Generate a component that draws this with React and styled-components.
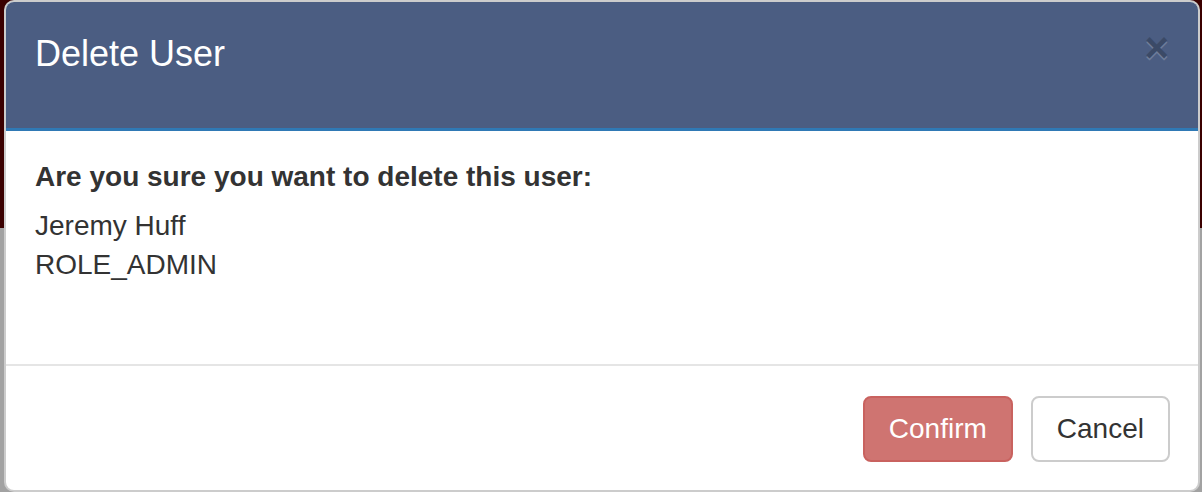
import React from "react";
import styled, { createGlobalStyle } from "styled-components";

const GlobalStyle = createGlobalStyle`
  html, body {
    margin: 0;
    padding: 0;
  }
  body {
    font-family: "Liberation Sans", Arial, Helvetica, sans-serif;
    color: #333;
  }
`;

const Backdrop = styled.div`
  height: 492px;
  box-sizing: border-box;
  padding: 0 2px 0 4px;
  background: linear-gradient(to bottom, #3b0000 0, #3b0000 228px, #a2a2a2 228px);
  overflow: hidden;
`;

const Dialog = styled.div`
  height: 492px;
  box-sizing: border-box;
  display: flex;
  flex-direction: column;
  background: #fff;
  border: 2px solid rgba(0, 0, 0, 0.2);
  border-radius: 10px;
  overflow: hidden;
`;

const Header = styled.div`
  display: flex;
  justify-content: space-between;
  align-items: flex-start;
  height: 129px;
  box-sizing: border-box;
  padding: 26px 29px 0 29px;
  background: #4b5d82;
  border-bottom: 3px solid #2f79b5;
`;

const Title = styled.h4`
  margin: 0;
  font-size: 36px;
  line-height: 51px;
  font-weight: normal;
  color: #fff;
`;

const Close = styled.button`
  margin-top: -1px;
  padding: 0;
  border: 0;
  background: transparent;
  font-family: "Liberation Sans", Arial, sans-serif;
  font-size: 42px;
  font-weight: bold;
  line-height: 42px;
  color: #000;
  opacity: 0.2;
  text-shadow: 0 2px 0 #fff;
  cursor: pointer;
`;

const Body = styled.div`
  flex: 1;
  padding: 26px 29px;
  font-size: 28px;
  line-height: 40px;
`;

const Question = styled.div`
  font-weight: bold;
  margin-bottom: 9px;
`;

const Line = styled.div`
  line-height: 39px;
`;

const Footer = styled.div`
  display: flex;
  justify-content: flex-end;
  gap: 18px;
  padding: 30px 28px 28px;
  border-top: 2px solid #e5e5e5;
`;

const Button = styled.button`
  height: 66px;
  box-sizing: border-box;
  padding: 0 24px;
  font-family: "Liberation Sans", Arial, sans-serif;
  font-size: 28px;
  border-radius: 8px;
  border: 2px solid ${(p) => (p.$danger ? "#c9625f" : "#ccc")};
  background: ${(p) => (p.$danger ? "#cf7471" : "#fff")};
  color: ${(p) => (p.$danger ? "#fff" : "#333")};
  cursor: pointer;
`;

export default function App() {
  return (
    <Backdrop>
      <GlobalStyle />
      <Dialog>
        <Header>
          <Title>Delete User</Title>
          <Close aria-label="Close">×</Close>
        </Header>
        <Body>
          <Question>Are you sure you want to delete this user:</Question>
          <Line>Jeremy Huff</Line>
          <Line>ROLE_ADMIN</Line>
        </Body>
        <Footer>
          <Button $danger>Confirm</Button>
          <Button>Cancel</Button>
        </Footer>
      </Dialog>
    </Backdrop>
  );
}
